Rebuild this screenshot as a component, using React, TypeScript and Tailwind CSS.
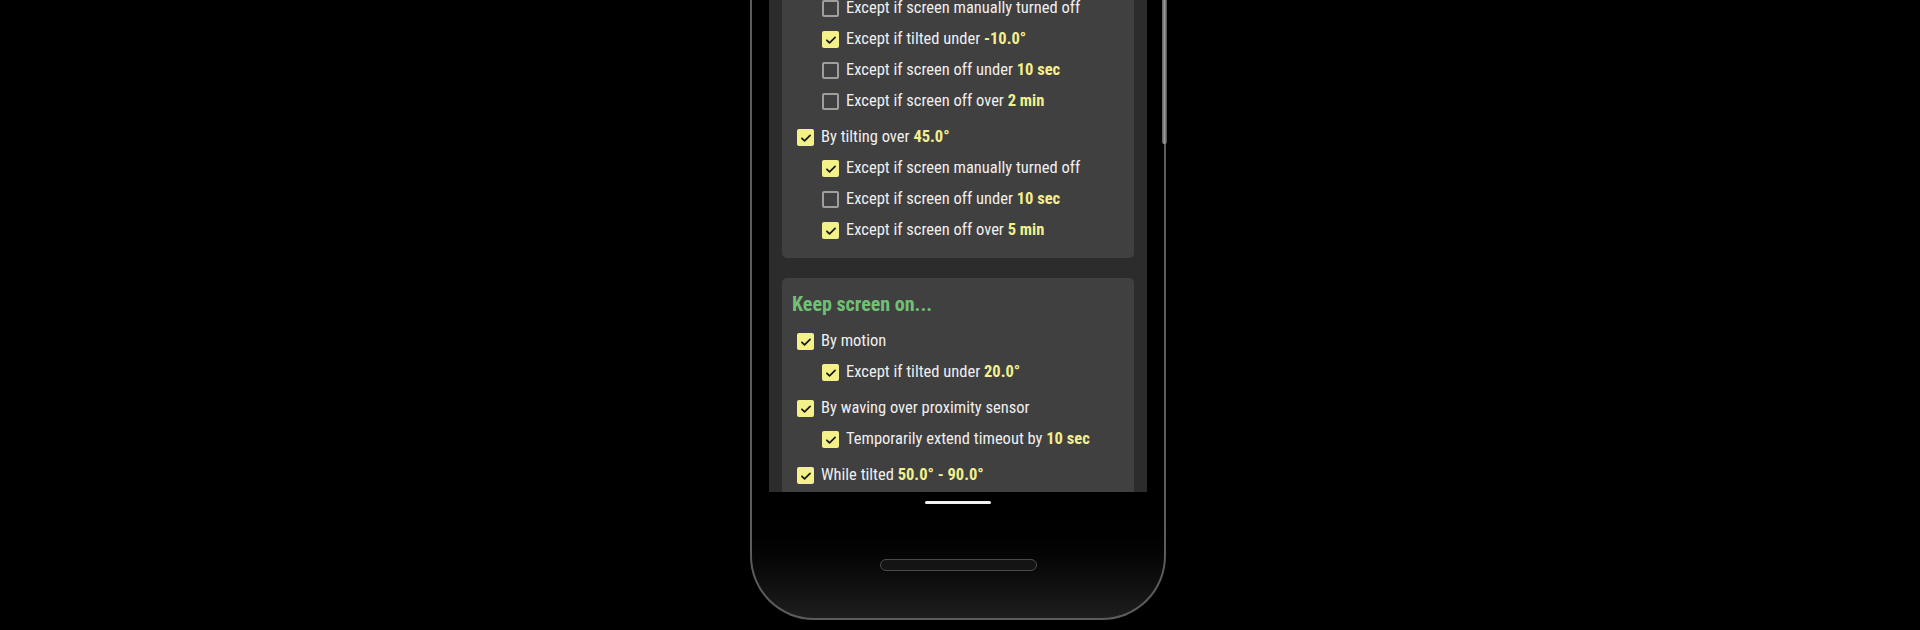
import React from 'react';

type Part = { t: string; v?: boolean };

interface RowProps {
  checked: boolean;
  sub?: boolean;
  parts: Part[];
  gapTop?: boolean;
}

function Box({ checked }: { checked: boolean }) {
  if (!checked) {
    return <span className="w-[17px] h-[17px] shrink-0 rounded-[2px] border-2 border-[#9e9e9e]" />;
  }
  return (
    <span className="w-[17px] h-[17px] shrink-0 rounded-[2px] bg-[#f5f18a] flex items-center justify-center">
      <svg viewBox="0 0 24 24" className="w-[14px] h-[14px]" fill="none" stroke="#1a1a1a" strokeWidth="3" strokeLinecap="round" strokeLinejoin="round">
        <path d="M5 12.5l4.5 4.5L19 7.5" />
      </svg>
    </span>
  );
}

function Row({ checked, sub, parts, gapTop }: RowProps) {
  return (
    <div className={`flex items-center h-[31px] gap-[7px] ${sub ? 'pl-[40px]' : 'pl-[15px]'} ${gapTop ? 'mt-[5px]' : ''}`}>
      <Box checked={checked} />
      <span className="text-[16.5px] text-[#efefef] whitespace-nowrap">
        {parts.map((p, i) =>
          p.v ? (
            <span key={i} className="font-bold text-[#f3ef8d]">{p.t}</span>
          ) : (
            <span key={i}>{p.t}</span>
          )
        )}
      </span>
    </div>
  );
}

export default function App() {
  return (
    <div className="h-[630px] w-full bg-black overflow-hidden font-['Roboto',sans-serif] font-stretch-condensed">
      <div className="relative ml-[750px] w-[416px] h-[620px] rounded-b-[64px] border-x-2 border-b-2 border-[#5c5c5c] bg-gradient-to-b from-black via-black via-80% to-[#1e1e1e] flex flex-col items-center px-[17px]">
        {/* side button */}
        <div className="absolute right-[-3px] top-0 w-[5px] h-[144px] rounded-b-[2px] bg-gradient-to-r from-[#5a5a5a] via-[#9a9a9a] to-[#4a4a4a]" />

        <div className="w-full h-[492px] bg-[#2c2c2c] overflow-hidden px-[13px]">
          <div className="-mt-[7px] bg-[#404040] rounded-[5px] pb-3">
            <Row checked={false} sub parts={[{ t: 'Except if screen manually turned off' }]} />
            <Row checked sub parts={[{ t: 'Except if tilted under ' }, { t: '-10.0°', v: true }]} />
            <Row checked={false} sub parts={[{ t: 'Except if screen off under ' }, { t: '10 sec', v: true }]} />
            <Row checked={false} sub parts={[{ t: 'Except if screen off over ' }, { t: '2 min', v: true }]} />
            <Row checked gapTop parts={[{ t: 'By tilting over ' }, { t: '45.0°', v: true }]} />
            <Row checked sub parts={[{ t: 'Except if screen manually turned off' }]} />
            <Row checked={false} sub parts={[{ t: 'Except if screen off under ' }, { t: '10 sec', v: true }]} />
            <Row checked sub parts={[{ t: 'Except if screen off over ' }, { t: '5 min', v: true }]} />
          </div>

          <div className="mt-[20px] bg-[#404040] rounded-[5px] pt-[12px] pb-4">
            <div className="pl-[10px] h-[28px] flex items-center text-[20px] font-bold text-[#72bf76]">Keep screen on...</div>
            <div className="h-[8px]" />
            <Row checked parts={[{ t: 'By motion' }]} />
            <Row checked sub parts={[{ t: 'Except if tilted under ' }, { t: '20.0°', v: true }]} />
            <Row checked gapTop parts={[{ t: 'By waving over proximity sensor' }]} />
            <Row checked sub parts={[{ t: 'Temporarily extend timeout by ' }, { t: '10 sec', v: true }]} />
            <Row checked gapTop parts={[{ t: 'While tilted ' }, { t: '50.0° - 90.0°', v: true }]} />
          </div>
        </div>

        <div className="mt-[9px] w-[66px] h-[3px] rounded-full bg-[#f2f2f2]" />
        <div className="mt-[55px] w-[157px] h-[12px] rounded-full border border-[#4a4a4a] bg-[#141414]" />
      </div>
    </div>
  );
}
